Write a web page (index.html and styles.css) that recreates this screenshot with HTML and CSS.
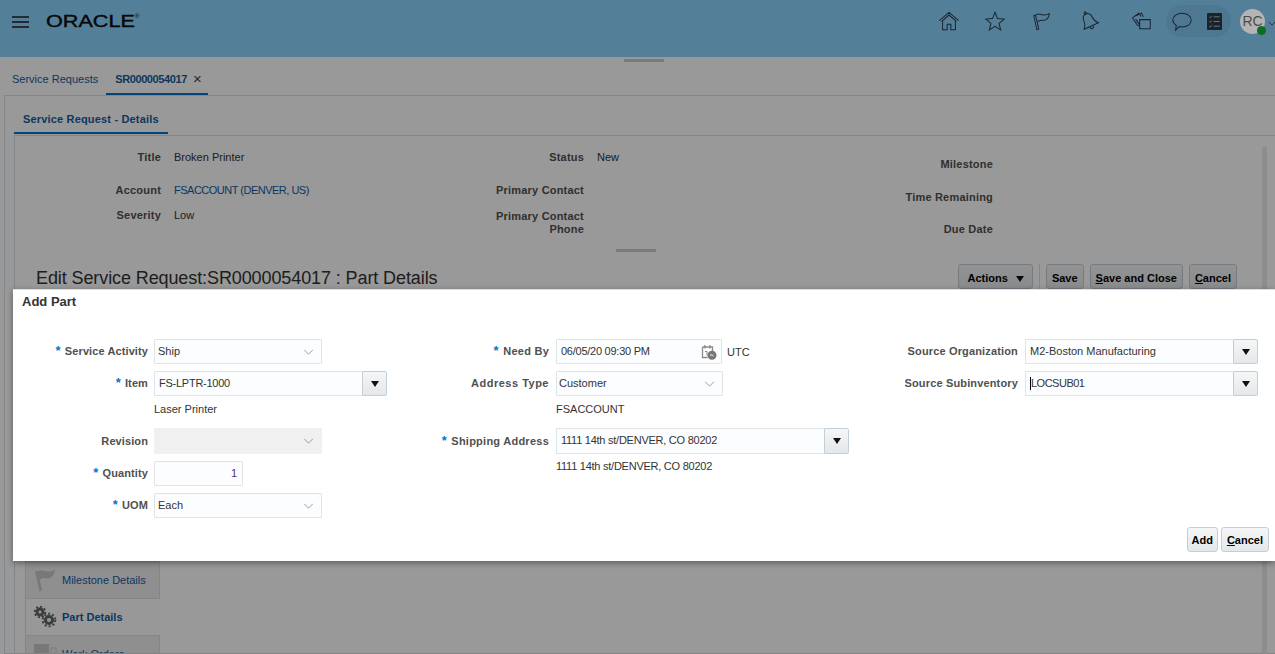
FILE: index.html
```html
<!DOCTYPE html>
<html lang="en">
<head>
    <meta charset="UTF-8">
    <title>Service Request - Part Details</title>
    <link rel="stylesheet" href="styles.css">
</head>
<body>
    <header class="topbar">
        <div class="burger"><span></span><span></span><span></span></div>
        <div class="logo">ORACLE<sup>®</sup></div>
        <div class="top-icons">
            <svg class="top-icon home-icon" viewBox="0 0 24 24"><path d="M1.500 11.500 12 2.500l10.500 9M4 12.500 12 5.500l8 7M5 12v9.500h5v-6h4v6h5V12"/></svg>
            <svg class="top-icon star-icon" viewBox="0 0 24 24"><path d="M12 2.500l2.700 6.900 7.300.5-5.600 4.700 1.800 7.200L12 17.900l-6.200 3.900 1.800-7.200L2 9.900l7.300-.5z"/></svg>
            <svg class="top-icon flag-icon" viewBox="0 0 24 24"><path d="M3 6l3.500 15.500 2-.5L5 5.500zM5.500 5c4-2 6 .5 9 .5 2 0 4-.8 5.500-1.500-.5 3-1.500 5.500-3.500 6.500-3 1.500-5-.5-9 2"/></svg>
            <svg class="top-icon bell-icon" viewBox="0 0 24 24"><g transform="rotate(-25 12 12)"><path d="M12 3.500c-3.500 0-5 2.500-5 6 0 4-1 6-3.500 8.500h17c-2.500-2.500-3.500-4.500-3.500-8.500 0-3.500-1.500-6-5-6zM10 18c0 2 1 3 2 3s2-1 2-3"/><circle cx="12" cy="2.300" r="1.200"/></g></svg>
            <svg class="top-icon stack-icon" viewBox="0 0 24 24"><path d="M1.500 8.500 8.500 3.500l2.500 3.500M1.500 8.500l5.500 8M4.500 6.500l7-3 2 4M9.500 10.500h11.500v10H9.500zM7 16.500l2.500 1M5 10l4.500 6"/></svg>
            <div class="pill">
                <svg class="top-icon chat-icon" viewBox="0 0 24 24"><path d="M12 3.500c5.500 0 10 3 10 7.500s-4.500 7.500-10 7.500c-1.200 0-2 0-3-.4L5 22l.8-5.300C3.500 15.300 2 13.300 2 11c0-4.500 4.500-7.500 10-7.500z"/></svg>
                <svg class="list-icon" viewBox="0 0 16 18"><rect width="16" height="18" rx="1"/><path d="M2.500 4l1 1 1.500-2M7 4h6.500M2.500 9l1 1 1.500-2M7 9h6.500M2.500 14l1 1 1.500-2M7 14h6.500"/></svg>
            </div>
            <div class="avatar">RC<span class="presence"></span></div>
            <svg class="avatar-arrow" viewBox="0 0 10 6"><path d="M1 1l4 4 4-4"/></svg>
        </div>
    </header>
    <div class="handle top-handle"></div>

    <nav class="page-tabs">
        <a class="page-tab">Service Requests</a>
        <a class="page-tab active"><span class="tighter">SR0000054017</span><span class="tab-close">×</span></a>
    </nav>

    <main class="outer-panel">
        <div class="inner-tabs">
            <a class="inner-tab">Service Request - Details</a>
        </div>
        <section class="inner-panel">
            <div class="summary">
                <dl class="summary-col col-one">
                    <dt>Title</dt><dd>Broken Printer</dd>
                    <dt>Account</dt><dd><a class="link caps">FSACCOUNT (DENVER, US)</a></dd>
                    <dt>Severity</dt><dd>Low</dd>
                </dl>
                <dl class="summary-col col-two">
                    <dt>Status</dt><dd>New</dd>
                    <dt>Primary Contact</dt><dd></dd>
                    <dt class="two-line">Primary Contact Phone</dt><dd></dd>
                </dl>
                <dl class="summary-col col-three">
                    <dt>Milestone</dt><dd></dd>
                    <dt>Time Remaining</dt><dd></dd>
                    <dt>Due Date</dt><dd></dd>
                </dl>
            </div>
            <div class="handle mid-handle"></div>
            <div class="title-row">
                <h1>Edit Service Request:SR0000054017 : Part Details</h1>
                <div class="title-actions">
                    <button class="btn btn-menu">Actions <span class="btn-arrow"></span></button>
                    <span class="btn-sep"></span>
                    <button class="btn">Save</button>
                    <button class="btn"><u>S</u>ave and Close</button>
                    <button class="btn"><u>C</u>ancel</button>
                </div>
            </div>
            <ul class="side-list">
                <li class="side-item">
                    <svg class="side-icon" viewBox="0 0 24 24"><path d="M2 3l4.500 20 2.500-.6L5 3zM5 3c5-2 7 .5 10 .5 3 0 5-1 7-2-.5 4-2 7-5 8.500-4 1.500-6-1-10 1.500z"/></svg>
                    <a class="link">Milestone Details</a>
                </li>
                <li class="side-item current">
                    <svg class="side-icon gears" viewBox="0 0 24 24"><circle cx="7" cy="7" r="3" class="gear-ring"/><circle cx="7" cy="7" r="5.200" class="gear-teeth"/><circle cx="16" cy="15" r="3.600" class="gear-ring"/><circle cx="16" cy="15" r="6.300" class="gear-teeth"/></svg>
                    <a class="link">Part Details</a>
                </li>
                <li class="side-item">
                    <svg class="side-icon" viewBox="0 0 24 24"><rect x="1" y="2" width="15" height="22"/><rect x="18" y="6" width="5" height="6" fill="none" stroke="#cfcfcf"/></svg>
                    <a class="link">Work Orders</a>
                </li>
            </ul>
        </section>
    </main>
    <div class="panel-scroll"></div>

    <div class="overlay"></div>

    <div class="dialog">
        <h2 class="dialog-title">Add Part</h2>
        <div class="dialog-form">
            <div class="form-col form-col-one">
                <div class="field">
                    <label><span class="req">*</span> Service Activity</label>
                    <div class="control select">Ship<svg class="chevron" viewBox="0 0 12 7"><path d="M1 1l5 5 5-5"/></svg></div>
                </div>
                <div class="field">
                    <label><span class="req">*</span> Item</label>
                    <div class="combo item-combo"><div class="control tight">FS-LPTR-1000</div><span class="combo-btn"><span class="btn-arrow"></span></span></div>
                </div>
                <div class="field-note">Laser Printer</div>
                <div class="field tall">
                    <label>Revision</label>
                    <div class="control select disabled"><svg class="chevron" viewBox="0 0 12 7"><path d="M1 1l5 5 5-5"/></svg></div>
                </div>
                <div class="field">
                    <label><span class="req">*</span> Quantity</label>
                    <div class="control qty">1</div>
                </div>
                <div class="field">
                    <label><span class="req">*</span> UOM</label>
                    <div class="control select">Each<svg class="chevron" viewBox="0 0 12 7"><path d="M1 1l5 5 5-5"/></svg></div>
                </div>
            </div>

            <div class="form-col form-col-two">
                <div class="field">
                    <label><span class="req">*</span> Need By</label>
                    <div class="control date-input tight">06/05/20 09:30 PM
                        <svg class="calendar" viewBox="0 0 16 16"><path d="M1.500 3h10v5M1.500 3v10.500h5M4 1v3.500M9 1v3.500" fill="none" stroke="#8a8a8a" stroke-width="1.300"/><path d="M4 7.500h2v4" fill="none" stroke="#8a8a8a"/><circle cx="11" cy="11.300" r="4.500" fill="#777"/><path d="M9 11h2l1.500 1" fill="none" stroke="#eee"/></svg>
                    </div>
                    <span class="tz">UTC</span>
                </div>
                <div class="field">
                    <label class="wide-label">Address Type</label>
                    <div class="control select type-select">Customer<svg class="chevron" viewBox="0 0 12 7"><path d="M1 1l5 5 5-5"/></svg></div>
                </div>
                <div class="field-note">FSACCOUNT</div>
                <div class="field tall">
                    <label><span class="req">*</span> Shipping Address</label>
                    <div class="combo address-combo"><div class="control tight">1111 14th st/DENVER, CO 80202</div><span class="combo-btn"><span class="btn-arrow"></span></span></div>
                </div>
                <div class="field-note address-note tight">1111 14th st/DENVER, CO 80202</div>
            </div>

            <div class="form-col form-col-three">
                <div class="field">
                    <label>Source Organization</label>
                    <div class="combo source-combo"><div class="control">M2-Boston Manufacturing</div><span class="combo-btn"><span class="btn-arrow"></span></span></div>
                </div>
                <div class="field">
                    <label>Source Subinventory</label>
                    <div class="combo source-combo"><div class="control caps"><span class="caret"></span>LOCSUB01</div><span class="combo-btn"><span class="btn-arrow"></span></span></div>
                </div>
            </div>
        </div>
        <div class="dialog-actions">
            <button class="btn btn-add">Add</button>
            <button class="btn"><u>C</u>ancel</button>
        </div>
    </div>
</body>
</html>
```

FILE: styles.css
```css
* {
    box-sizing: border-box;
}

html, body {
    height: 654px;
}

body {
    margin: 0;
    overflow: hidden;
    position: relative;
    background: #fff;
    font-family: "Liberation Sans", Arial, sans-serif;
    font-size: 11px;
    color: #333;
}

a {
    text-decoration: none;
}

.tight {
    letter-spacing: -0.25px;
}

.tighter {
    letter-spacing: -0.4px;
}

.caps {
    letter-spacing: -0.5px;
}

.topbar {
    height: 57px;
    background: #8dd4ff;
    display: flex;
    align-items: flex-start;
    padding-left: 12px;
}

.burger {
    width: 17px;
    margin-top: 16px;
    display: flex;
    flex-direction: column;
    gap: 3px;
}

.burger span {
    height: 2px;
    background: #3a4a58;
}

.logo {
    margin-left: 17px;
    margin-top: 12px;
    font-size: 17px;
    line-height: 20px;
    color: #0c0c0c;
    -webkit-text-stroke: 0.4px #0c0c0c;
    transform: scaleX(1.27);
    transform-origin: left;
}

.logo sup {
    font-size: 5px;
    -webkit-text-stroke: 0;
    vertical-align: 9px;
    line-height: 0;
}

.top-icons {
    margin-left: auto;
    margin-right: -1px;
    display: flex;
    align-items: center;
    height: 42px;
}

.top-icon {
    width: 22px;
    height: 22px;
    fill: none;
    stroke: #2a3d4d;
    stroke-width: 1.100;
}

.star-icon {
    margin-left: 24px;
}

.flag-icon, .bell-icon {
    margin-left: 25px;
}

.stack-icon {
    margin-left: 31px;
    margin-right: 13px;
}

.pill {
    width: 65px;
    height: 32px;
    border-radius: 16px;
    background: #82c8f2;
    display: flex;
    align-items: center;
    padding-left: 5px;
}

.list-icon {
    width: 15px;
    height: 17px;
    margin-left: 14px;
}

.list-icon rect {
    fill: #2a3b49;
}

.list-icon path {
    fill: none;
    stroke: #b9cbd8;
    stroke-width: 1;
}

/* brighter than the dimmed page in the reference, so it sits above the overlay */
.avatar {
    width: 25px;
    height: 25px;
    margin-left: 9px;
    border-radius: 50%;
    background: #b4b4b4;
    color: #4c4c4c;
    font-size: 14px;
    line-height: 25px;
    text-align: center;
    position: relative;
    z-index: 2;
}

.presence {
    position: absolute;
    right: -1px;
    bottom: -1px;
    width: 9px;
    height: 9px;
    border-radius: 50%;
    background: #0a6f22;
}

.avatar-arrow {
    width: 8px;
    height: 5px;
    margin-left: 3px;
    margin-top: 5px;
    fill: none;
    stroke: #2a3d4d;
    stroke-width: 1;
}

.handle {
    position: absolute;
    width: 40px;
    height: 3px;
    background: #c4ced7;
}

.top-handle {
    left: 624px;
    top: 59px;
}

.mid-handle {
    left: 601px;
    top: 113px;
}

.page-tabs {
    height: 38px;
    display: flex;
    padding-left: 12px;
}

.page-tab {
    color: #145c9e;
    font-size: 11px;
    line-height: 44px;
    margin-right: 8px;
}

.page-tab.active {
    font-weight: bold;
    padding: 0 6px 0 9px;
    border-bottom: 2px solid #0572ce;
    height: 38px;
    line-height: 44px;
}

.tab-close {
    font-weight: normal;
    font-size: 15px;
    color: #444;
    margin-left: 6px;
    vertical-align: -1px;
}

.outer-panel {
    margin-left: 4px;
    border: 1px solid #d6dfe6;
    border-right: none;
    height: 559px;
    padding-left: 9px;
    overflow: hidden;
}

.inner-tabs {
    height: 39px;
}

.inner-tab {
    display: inline-block;
    height: 38px;
    padding: 0 9px;
    color: #145c9e;
    font-weight: bold;
    font-size: 11px;
    line-height: 46px;
    letter-spacing: 0.17px;
    border-bottom: 2px solid #0572ce;
}

.inner-panel {
    position: relative;
    border: 1px solid #d6dfe6;
    border-right: none;
    height: 520px;
    overflow: hidden;
}

.summary {
    display: flex;
    height: 114px;
}

.summary-col {
    display: grid;
    margin: 15px 0 0;
    column-gap: 13px;
    grid-template-rows: 33px 25px auto;
    width: 400px;
    line-height: 13px;
}

.summary-col dt {
    font-weight: bold;
    color: #505050;
    text-align: right;
    letter-spacing: 0.2px;
}

.summary-col dd {
    margin: 0;
}

.summary-col .two-line {
    margin-top: 1px;
}

.col-one {
    grid-template-columns: 146px 1fr;
}

.summary .col-two {
    grid-template-columns: 100px 1fr;
    margin-left: 69px;
    width: 331px;
}

.summary .col-three {
    grid-template-columns: 178px 1fr;
    margin-top: 22px;
    grid-template-rows: 33px 32px auto;
}

.link {
    color: #145c9e;
}

.title-row {
    display: flex;
    align-items: flex-start;
    margin-top: 14px;
    padding: 0 38px 0 21px;
    height: 32px;
}

.title-row h1 {
    margin: 3px 0 0;
    font-size: 18px;
    line-height: 22px;
    font-weight: normal;
    letter-spacing: -0.1px;
    color: #333;
}

.title-actions {
    margin-left: auto;
    display: flex;
    gap: 6px;
    align-items: flex-start;
}

.btn {
    height: 25px;
    padding: 1px 5px 0;
    border: 1px solid #c4ced7;
    border-radius: 3px;
    background: linear-gradient(#f4f6f7, #e4e8ea);
    font-family: inherit;
    font-size: 11px;
    font-weight: bold;
    color: #000;
}

.title-actions .btn {
    padding-top: 3px;
}

.title-actions .btn-menu {
    padding-left: 8px;
    padding-right: 8px;
}

.btn-menu .btn-arrow {
    margin-left: 5px;
}

.btn-add {
    padding: 1px 4px 0;
}

.btn-arrow {
    display: inline-block;
    border-left: 4.500px solid transparent;
    border-right: 4.500px solid transparent;
    border-top: 6px solid #111;
    margin-left: 4px;
}

.btn-sep {
    width: 1px;
    height: 25px;
    background: #d6dfe6;
}

.side-list {
    list-style: none;
    margin: 265px 0 0 10px;
    padding: 0;
    width: 135px;
}

.side-item {
    height: 38px;
    display: flex;
    align-items: center;
    gap: 5px;
    padding-left: 7px;
    background: #eeeeee;
    border: 1px solid #d6dfe6;
    margin-bottom: -1px;
}

.side-item.current {
    background: #fdfdfd;
    border-right: none;
    font-weight: bold;
}

.side-icon {
    width: 24px;
    height: 24px;
    fill: #c8c8c8;
}

.gears .gear-ring {
    fill: none;
    stroke: #666;
    stroke-width: 3;
}

.gears .gear-teeth {
    fill: none;
    stroke: #666;
    stroke-width: 2;
    stroke-dasharray: 2 2;
}

.panel-scroll {
    position: absolute;
    left: 1262px;
    top: 147px;
    width: 5px;
    height: 507px;
    background: #ebebeb;
}

.overlay {
    position: absolute;
    inset: 0;
    background: rgba(0, 0, 0, 0.4);
}

.dialog {
    position: absolute;
    left: 13px;
    top: 289px;
    width: 1262px;
    height: 272px;
    background: #fff;
    border-top: 1px solid #d6dfe6;
    box-shadow: 0 2px 6px rgba(0, 0, 0, 0.4);
    padding: 0 6px 0 9px;
    z-index: 3;
}

.dialog-title {
    margin: 4px 0 0;
    font-size: 13px;
    line-height: 16px;
    font-weight: bold;
    color: #333;
}

.dialog-form {
    display: flex;
    margin-top: 29px;
    margin-left: -9px;
}

.form-col {
    display: flex;
    flex-direction: column;
    gap: 7px;
}

.form-col-one {
    --label-width: 135px;
    --label-gap: 6px;
    --label-spacing: 0.1px;
    width: 400px;
}

.form-col-two {
    --label-width: 136px;
    --label-gap: 7px;
    --label-spacing: 0.25px;
    width: 469px;
}

.form-col-three {
    --label-width: 136px;
    --label-gap: 7px;
    --label-spacing: 0.15px;
}

.field {
    display: flex;
    align-items: center;
    height: 25px;
}

.field.tall {
    height: 26px;
}

.field label {
    width: var(--label-width);
    margin-right: var(--label-gap);
    margin-bottom: 1px;
    text-align: right;
    font-weight: bold;
    color: #505050;
    letter-spacing: var(--label-spacing);
    flex: none;
    white-space: nowrap;
}

.field .wide-label {
    letter-spacing: 0.5px;
}

.req {
    color: #0572ce;
    font-size: 13px;
    line-height: 11px;
    margin-right: 1px;
}

.field-note {
    height: 18px;
    margin-left: calc(var(--label-width) + var(--label-gap));
    line-height: 13px;
    white-space: nowrap;
}

.address-note {
    margin-top: -1px;
}

.control {
    height: 100%;
    border: 1px solid #dfe4e7;
    border-radius: 1px;
    background: #fcfdfe;
    padding: 0 4px;
    line-height: 23px;
    color: #333;
    white-space: nowrap;
    position: relative;
}

.select {
    width: 168px;
    padding-left: 3px;
}

.type-select {
    width: 167px;
    padding-left: 2px;
}

.select .chevron {
    position: absolute;
    right: 7px;
    top: 9px;
    width: 11px;
    height: 6px;
    fill: none;
    stroke: #8b8f93;
    stroke-width: 1;
}

.disabled {
    background: #f0f0f0;
    border-color: #f0f0f0;
}

.qty {
    width: 89px;
    text-align: right;
    padding-right: 5px;
    color: #5a2a73;
}

.date-input {
    width: 166px;
}

.calendar {
    position: absolute;
    right: 4px;
    top: 4px;
    width: 16px;
    height: 16px;
}

.tz {
    margin-left: 5px;
}

.combo {
    display: flex;
    height: 100%;
}

.combo .control {
    flex: 1;
    border-right: none;
}

.item-combo {
    width: 233px;
}

.address-combo {
    width: 293px;
}

.source-combo {
    width: 233px;
}

.combo-btn {
    width: 25px;
    flex: none;
    display: flex;
    align-items: center;
    justify-content: center;
    border: 1px solid #c4ced7;
    border-radius: 0 2px 2px 0;
    background: linear-gradient(#f4f6f7, #e4e8ea);
}

.combo-btn .btn-arrow {
    margin-left: 0;
}

.caret {
    display: inline-block;
    width: 1px;
    height: 13px;
    background: #000;
    vertical-align: -3px;
}

.dialog-actions {
    position: absolute;
    right: 6px;
    bottom: 9px;
    display: flex;
    gap: 3px;
}
```
